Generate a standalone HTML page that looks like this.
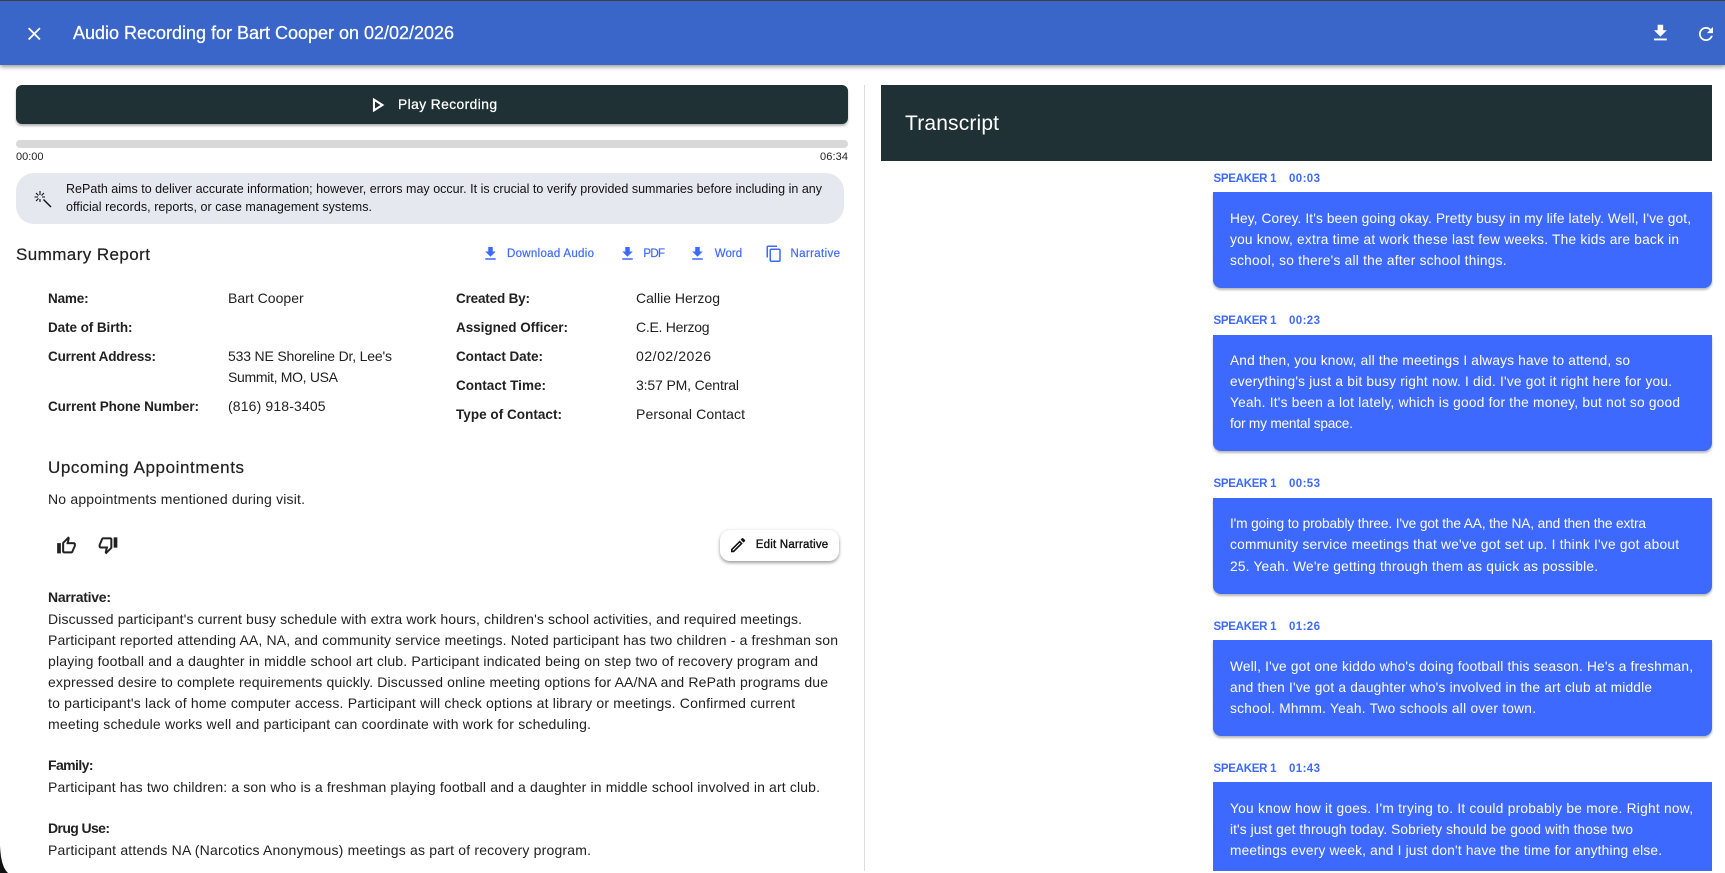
<!DOCTYPE html>
<html lang="en"><head><meta charset="utf-8"><title>Audio Recording for Bart Cooper</title>
<style>
html,body{margin:0;padding:0;width:1725px;height:873px;overflow:hidden;background:#fff;font-family:"Liberation Sans",sans-serif}
.b{position:absolute}
#hdr{left:0;top:0;width:1725px;height:65px;background:#3b66c9;border-top:1px solid #3c4045;box-sizing:border-box;box-shadow:0 2px 4px rgba(0,0,0,.32),0 1px 6px rgba(0,0,0,.12)}
#play{left:16px;top:85px;width:832px;height:39px;background:#1f3135;border-radius:6px;box-shadow:0 2px 2px rgba(0,0,0,.3)}
#bar{left:16px;top:140px;width:832px;height:8px;background:#d8d8d8;border-radius:4px}
#note{left:16px;top:173px;width:828px;height:51px;background:#e5e8ef;border-radius:18px}
#edit{left:720px;top:530px;width:119px;height:31px;background:#fff;border-radius:10px;box-shadow:0 2px 3px rgba(0,0,0,.35),0 0 4px rgba(0,0,0,.08)}
#div{left:864px;top:85px;width:1px;height:786px;background:#dcdcdc}
#tr{left:881px;top:85px;width:831px;height:76px;background:#1f3135}
.bub{position:absolute;left:1213px;width:499px;background:#3d69ff;border-radius:0 0 8px 8px;box-shadow:0 2px 2px rgba(0,0,0,.28)}
svg{position:absolute;left:0;top:0}
text{font-family:"Liberation Sans",sans-serif;fill:#212121}
.l{font-size:13.5px;font-weight:700}
.v{font-size:14px}
.n{font-size:14px}
.nb{font-size:14px;font-weight:700}
.w{font-size:13.7px;fill:#fff}
.s{font-size:11.5px;font-weight:700;fill:#3d69ff}
.a{font-size:11.5px;fill:#3d69ff;stroke:#3d69ff;stroke-width:.2}
.c{font-size:12.5px}
.t{font-size:11px}
.h{font-size:17px;stroke:#212121;stroke-width:.2}
</style></head><body>
<div class="b" id="hdr"></div>
<div class="b" id="play"></div>
<div class="b" id="bar"></div>
<div class="b" id="note"></div>
<div class="b" id="edit"></div>
<div class="b" id="div"></div>
<div class="b" id="tr"></div>
<div class="bub" style="top:192px;height:96px"></div>
<div class="bub" style="top:335px;height:116px"></div>
<div class="bub" style="top:498px;height:96px"></div>
<div class="bub" style="top:640px;height:96px"></div>
<div class="bub" style="top:782px;height:89px;border-radius:0;box-shadow:none"></div>
<svg width="1725" height="873" viewBox="0 0 1725 873" xmlns="http://www.w3.org/2000/svg">
<!-- header -->
<svg x="23.5" y="23" width="21.6" height="21.6" viewBox="0 0 24 24"><path fill="#fff" d="M19 6.41 17.59 5 12 10.59 6.41 5 5 6.41 10.59 12 5 17.59 6.41 19 12 13.41 17.59 19 19 17.59 13.41 12z"/></svg>
<text x="73" y="39" textLength="381" style="font-size:18px;fill:#fff;stroke:#fff;stroke-width:.25">Audio Recording for Bart Cooper on 02/02/2026</text>
<svg x="1649.4" y="22" width="22" height="22" viewBox="0 0 24 24"><path fill="#fff" d="M19 9h-4V3H9v6H5l7 7 7-7zM5 18v2h14v-2H5z"/></svg>
<svg x="1695.5" y="23.5" width="21" height="21" viewBox="0 0 24 24"><path fill="#fff" d="M17.65 6.35C16.2 4.9 14.21 4 12 4c-4.42 0-7.99 3.58-7.99 8s3.57 8 7.99 8c3.73 0 6.84-2.55 7.73-6h-2.08c-.82 2.33-3.04 4-5.65 4-3.31 0-6-2.69-6-6s2.69-6 6-6c1.66 0 3.14.69 4.22 1.78L13 11h7V4l-2.35 2.35z"/></svg>
<!-- play -->
<svg x="364.6" y="92.5" width="25" height="25" viewBox="0 0 24 24"><path fill="#fff" d="M10 8.64 15.27 12 10 15.36V8.64M8 5v14l11-7L8 5z"/></svg>
<text x="398" y="109" textLength="99" style="font-size:13.8px;fill:#fff;stroke:#fff;stroke-width:.25">Play Recording</text>
<text class="t" x="16" y="160" textLength="27.5">00:00</text>
<text class="t" x="820" y="160" textLength="28">06:34</text>
<!-- notice -->
<g stroke="#111" stroke-width="1.1" fill="none"><path d="M43.5 199.5 51 207" stroke-width="1.4"/><path d="M40 191v4M40 199v3M34.5 197h3.5M42 197h3M36 193l2.5 2.5M44 193l-2.5 2.5M36 201l2.5-2.5"/></g>
<text class="c" x="66" y="193" textLength="756" style="fill:#111">RePath aims to deliver accurate information; however, errors may occur. It is crucial to verify provided summaries before including in any</text>
<text class="c" x="66" y="211" textLength="306" style="fill:#111">official records, reports, or case management systems.</text>
<!-- summary -->
<text class="h" x="16" y="260" textLength="134">Summary Report</text>
<svg x="481.5" y="244.7" width="18" height="18" viewBox="0 0 24 24"><path fill="#3d69ff" d="M19 9h-4V3H9v6H5l7 7 7-7zM5 18v2h14v-2H5z"/></svg>
<text class="a" x="507" y="257" textLength="87">Download Audio</text>
<svg x="618.5" y="244.7" width="18" height="18" viewBox="0 0 24 24"><path fill="#3d69ff" d="M19 9h-4V3H9v6H5l7 7 7-7zM5 18v2h14v-2H5z"/></svg>
<text class="a" x="643.4" y="257" textLength="21.6">PDF</text>
<svg x="688.5" y="244.7" width="18" height="18" viewBox="0 0 24 24"><path fill="#3d69ff" d="M19 9h-4V3H9v6H5l7 7 7-7zM5 18v2h14v-2H5z"/></svg>
<text class="a" x="714.8" y="257" textLength="27.4">Word</text>
<svg x="765" y="244.8" width="18" height="18" viewBox="0 0 24 24"><path fill="#3d69ff" d="M16 1H4c-1.1 0-2 .9-2 2v14h2V3h12V1zm3 4H8c-1.1 0-2 .9-2 2v14c0 1.1.9 2 2 2h11c1.1 0 2-.9 2-2V7c0-1.1-.9-2-2-2zm0 16H8V7h11v14z"/></svg>
<text class="a" x="790.5" y="257" textLength="49.5">Narrative</text>
<!-- fields -->
<text class="l" x="48" y="303" textLength="40.6">Name:</text>
<text class="l" x="48" y="332" textLength="84.5">Date of Birth:</text>
<text class="l" x="48" y="361" textLength="108">Current Address:</text>
<text class="l" x="48" y="411" textLength="151">Current Phone Number:</text>
<text class="v" x="228" y="303" textLength="75.7">Bart Cooper</text>
<text class="v" x="228" y="361" textLength="164">533 NE Shoreline Dr, Lee's</text>
<text class="v" x="228" y="382" textLength="110">Summit, MO, USA</text>
<text class="v" x="228" y="411" textLength="97.6">(816) 918-3405</text>
<text class="l" x="456" y="303" textLength="74">Created By:</text>
<text class="l" x="456" y="332" textLength="112">Assigned Officer:</text>
<text class="l" x="456" y="361" textLength="87">Contact Date:</text>
<text class="l" x="456" y="390" textLength="90">Contact Time:</text>
<text class="l" x="456" y="419" textLength="106">Type of Contact:</text>
<text class="v" x="636" y="303" textLength="84">Callie Herzog</text>
<text class="v" x="636" y="332" textLength="73.5">C.E. Herzog</text>
<text class="v" x="636" y="361" textLength="75">02/02/2026</text>
<text class="v" x="636" y="390" textLength="103">3:57 PM, Central</text>
<text class="v" x="636" y="419" textLength="109">Personal Contact</text>
<!-- appointments -->
<text class="h" x="48" y="473" textLength="196">Upcoming Appointments</text>
<text class="n" x="48" y="504" textLength="257">No appointments mentioned during visit.</text>
<svg x="56.5" y="535.7" width="20" height="20" viewBox="0 0 24 24"><path fill="#212121" stroke="#212121" stroke-width=".4" d="M9 21h9c.83 0 1.54-.5 1.84-1.22l3.02-7.05c.09-.23.14-.47.14-.73v-2c0-1.1-.9-2-2-2h-6.31l.95-4.57.03-.32c0-.41-.17-.79-.44-1.06L14.17 1 7.58 7.59C7.22 7.95 7 8.45 7 9v10c0 1.1.9 2 2 2zM9 9l4.34-4.34L12 10h9v2l-3 7H9V9zM1 9h4v12H1z"/></svg>
<svg x="98" y="535" width="20" height="20" viewBox="0 0 24 24"><path fill="#212121" stroke="#212121" stroke-width=".4" d="M15 3H6c-.83 0-1.54.5-1.84 1.22l-3.02 7.05c-.09.23-.14.47-.14.73v2c0 1.1.9 2 2 2h6.31l-.95 4.57-.03.32c0 .41.17.79.44 1.06L9.83 23l6.59-6.59c.36-.36.58-.86.58-1.41V5c0-1.1-.9-2-2-2zm0 12l-4.34 4.34L12 14H3v-2l3-7h9v10zm4-12h4v12h-4z"/></svg>
<svg x="728.6" y="535.6" width="19" height="19" viewBox="0 0 24 24"><path fill="#111" d="M14.06 9.02l.92.92L5.92 19H5v-.92l9.06-9.06M17.66 3c-.25 0-.51.1-.7.29l-1.83 1.83 3.75 3.75 1.83-1.83c.39-.39.39-1.02 0-1.41l-2.34-2.34c-.2-.2-.45-.29-.71-.29zm-3.6 3.19L3 17.25V21h3.75L17.81 9.94l-3.75-3.75z"/></svg>
<text x="755.7" y="548" textLength="72.5" style="font-size:11.5px;fill:#111;stroke:#111;stroke-width:.35">Edit Narrative</text>
<!-- narrative -->
<text class="nb" x="48" y="602" textLength="63">Narrative:</text>
<text class="n" x="48" y="624" textLength="754">Discussed participant's current busy schedule with extra work hours, children's school activities, and required meetings.</text>
<text class="n" x="48" y="645" textLength="790">Participant reported attending AA, NA, and community service meetings. Noted participant has two children - a freshman son</text>
<text class="n" x="48" y="666" textLength="770">playing football and a daughter in middle school art club. Participant indicated being on step two of recovery program and</text>
<text class="n" x="48" y="687" textLength="780">expressed desire to complete requirements quickly. Discussed online meeting options for AA/NA and RePath programs due</text>
<text class="n" x="48" y="708" textLength="747">to participant's lack of home computer access. Participant will check options at library or meetings. Confirmed current</text>
<text class="n" x="48" y="729" textLength="543">meeting schedule works well and participant can coordinate with work for scheduling.</text>
<text class="nb" x="48" y="770" textLength="45.5">Family:</text>
<text class="n" x="48" y="792" textLength="772">Participant has two children: a son who is a freshman playing football and a daughter in middle school involved in art club.</text>
<text class="nb" x="48" y="833" textLength="62">Drug Use:</text>
<text class="n" x="48" y="855" textLength="543">Participant attends NA (Narcotics Anonymous) meetings as part of recovery program.</text>
<!-- transcript -->
<text x="905" y="130" textLength="94" style="font-size:21px;fill:#fff">Transcript</text>
<text class="s" x="1213.5" y="182" textLength="63">SPEAKER 1</text><text class="s" x="1289" y="182" textLength="31">00:03</text>
<text class="w" x="1230" y="223" textLength="461">Hey, Corey. It's been going okay. Pretty busy in my life lately. Well, I've got,</text>
<text class="w" x="1230" y="244" textLength="449">you know, extra time at work these last few weeks. The kids are back in</text>
<text class="w" x="1230" y="265" textLength="276.5">school, so there's all the after school things.</text>
<text class="s" x="1213.5" y="324" textLength="63">SPEAKER 1</text><text class="s" x="1289" y="324" textLength="31">00:23</text>
<text class="w" x="1230" y="365" textLength="400">And then, you know, all the meetings I always have to attend, so</text>
<text class="w" x="1230" y="386" textLength="442">everything's just a bit busy right now. I did. I've got it right here for you.</text>
<text class="w" x="1230" y="407" textLength="450">Yeah. It's been a lot lately, which is good for the money, but not so good</text>
<text class="w" x="1230" y="428" textLength="123">for my mental space.</text>
<text class="s" x="1213.5" y="487" textLength="63">SPEAKER 1</text><text class="s" x="1289" y="487" textLength="31">00:53</text>
<text class="w" x="1230" y="528" textLength="416">I'm going to probably three. I've got the AA, the NA, and then the extra</text>
<text class="w" x="1230" y="549" textLength="449">community service meetings that we've got set up. I think I've got about</text>
<text class="w" x="1230" y="571" textLength="368">25. Yeah. We're getting through them as quick as possible.</text>
<text class="s" x="1213.5" y="630" textLength="63">SPEAKER 1</text><text class="s" x="1289" y="630" textLength="31">01:26</text>
<text class="w" x="1230" y="671" textLength="463">Well, I've got one kiddo who's doing football this season. He's a freshman,</text>
<text class="w" x="1230" y="692" textLength="422">and then I've got a daughter who's involved in the art club at middle</text>
<text class="w" x="1230" y="713" textLength="306">school. Mhmm. Yeah. Two schools all over town.</text>
<text class="s" x="1213.5" y="772" textLength="63">SPEAKER 1</text><text class="s" x="1289" y="772" textLength="31">01:43</text>
<text class="w" x="1230" y="813" textLength="463">You know how it goes. I'm trying to. It could probably be more. Right now,</text>
<text class="w" x="1230" y="834" textLength="403">it's just get through today. Sobriety should be good with those two</text>
<text class="w" x="1230" y="855" textLength="432">meetings every week, and I just don't have the time for anything else.</text>
<path d="M0 846C.8 860 3 868 8 873H0z" fill="#111"/>
</svg>
</body></html>
